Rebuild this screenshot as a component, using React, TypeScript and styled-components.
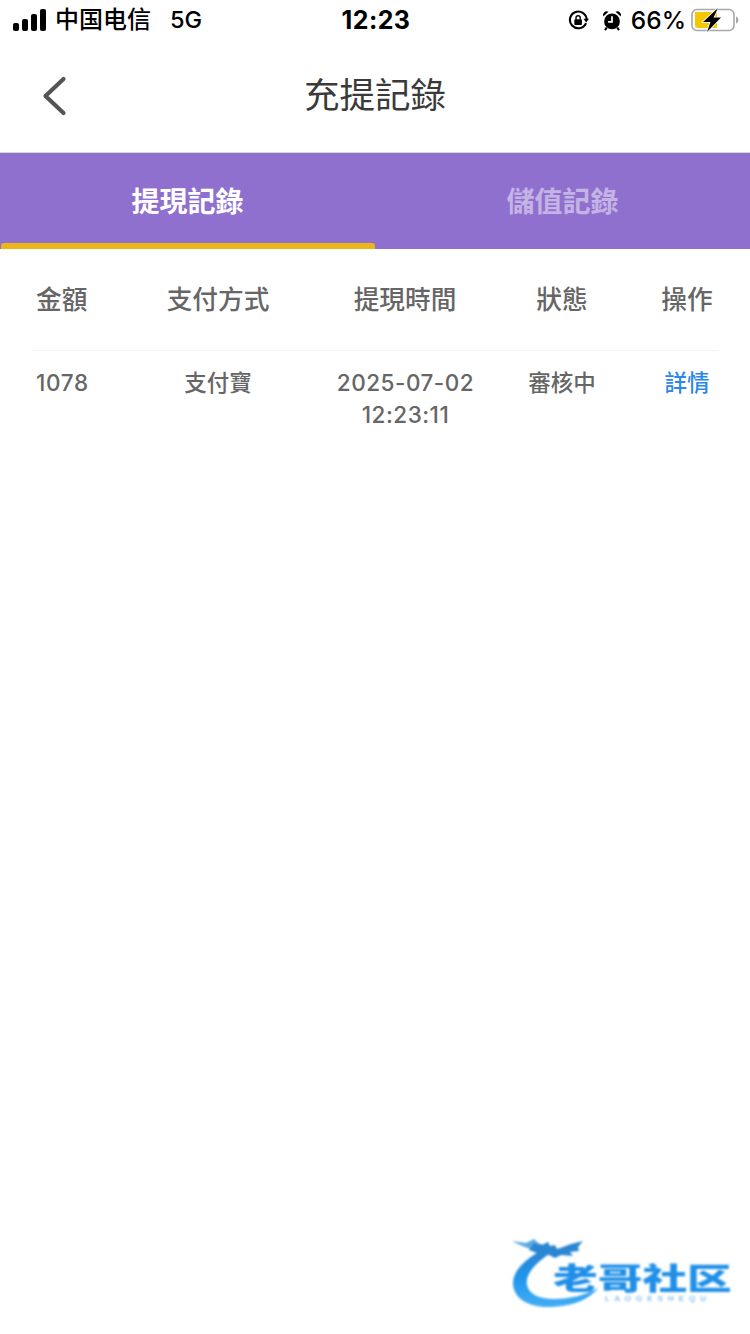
import React from 'react';
import styled, { createGlobalStyle } from 'styled-components';

const GlobalStyle = createGlobalStyle`
  html, body {
    margin: 0;
    padding: 0;
    background: #fff;
  }
  * {
    box-sizing: border-box;
  }
`;

const CJK = `Inter, "Noto Sans CJK TC", sans-serif`;

const Page = styled.div`
  position: relative;
  width: 750px;
  height: 1334px;
  overflow: hidden;
  background: #fff;
  font-family: ${CJK};
`;

const StatusBar = styled.div`
  display: grid;
  grid-template-columns: 1fr auto 1fr;
  align-items: center;
  height: 40px;
  padding: 0 11px 0 13px;
  color: #000;
`;

const StatusLeft = styled.div`
  display: flex;
  align-items: center;
  gap: 8px;
`;

const StatusRight = styled.div`
  display: flex;
  align-items: center;
  justify-content: flex-end;
  gap: 9px;
`;

const StatusIcons = styled.div`
  display: flex;
  align-items: center;
  gap: 13px;
`;

const Carrier = styled.span`
  font-family: Inter, "Noto Sans CJK SC", sans-serif;
  font-size: 24px;
  line-height: 40px;
  font-weight: 500;
`;

const Network = styled.span`
  font-size: 23.5px;
  line-height: 40px;
  font-weight: 500;
  margin-left: 11px;
`;

const Clock = styled.span`
  font-size: 25px;
  line-height: 40px;
  font-weight: 700;
  letter-spacing: 0.4px;
`;

const Percent = styled.span`
  font-size: 24.5px;
  line-height: 40px;
  font-weight: 500;
  margin-right: -4px;
`;

const NavBar = styled.div`
  position: relative;
  display: flex;
  align-items: center;
  justify-content: center;
  height: 113px;
  border-bottom: 1px solid #d9d5df;
`;

const BackButton = styled.div`
  position: absolute;
  left: 41px;
  top: 35px;
  display: flex;
`;

const Title = styled.h1`
  margin: 0;
  font-size: 35.5px;
  line-height: 48px;
  font-weight: 400;
  color: #3a3a3a;
`;

const Tabs = styled.div`
  display: flex;
  height: 96px;
  background: #9070ce;
`;

const Tab = styled.div<{ $active?: boolean }>`
  position: relative;
  flex: 1;
  display: flex;
  align-items: center;
  justify-content: center;
  padding-bottom: 2px;
  font-size: 28px;
  font-weight: 700;
  color: ${({ $active }) => ($active ? '#fff' : '#c4b3e5')};
  &::after {
    content: '';
    display: ${({ $active }) => ($active ? 'block' : 'none')};
    position: absolute;
    left: 1px;
    right: 0;
    bottom: 0;
    height: 6px;
    border-radius: 3px 3px 0 0;
    background: #ecb616;
  }
`;

const Table = styled.div`
  margin: 0 32px;
`;

const Row = styled.div<{ $head?: boolean }>`
  display: grid;
  grid-template-columns: 70px 232px 142px 172px 70px;
  align-items: start;
  text-align: center;
  color: #666;
  font-size: ${({ $head }) => ($head ? '25.7px' : '22.5px')};
  font-weight: 500;
  line-height: ${({ $head }) => ($head ? '36px' : '32px')};
  padding-top: ${({ $head }) => ($head ? '33px' : '16px')};
  padding-bottom: ${({ $head }) => ($head ? '32px' : '0')};
  border-bottom: ${({ $head }) => ($head ? '1px solid #f2f2f2' : 'none')};
  & > div:first-child {
    text-align: left;
    padding-left: 4px;
  }
  & > div:last-child {
    padding-left: 8px;
  }
`;

const AmountCell = styled.div`
  letter-spacing: 0.7px;
`;

const DateCell = styled.div`
  padding-left: 1px;
  letter-spacing: 0.5px;
  white-space: nowrap;
`;

const Link = styled.div`
  color: #2b87ea;
`;

const Watermark = styled.div`
  position: absolute;
  left: 510px;
  top: 1236px;
  width: 230px;
  height: 78px;
  filter: blur(0.8px);
`;

const WatermarkName = styled.div`
  position: absolute;
  left: 43px;
  top: 22px;
  font-family: "Noto Sans CJK SC", sans-serif;
  font-size: 30px;
  line-height: 36px;
  font-weight: 900;
  white-space: nowrap;
  color: #1f8fe8;
  transform: scaleX(1.49);
  transform-origin: left center;
`;

const WatermarkSub = styled.div`
  position: absolute;
  left: 95px;
  top: 58px;
  font-family: "Liberation Sans", sans-serif;
  font-size: 8px;
  line-height: 9px;
  letter-spacing: 5px;
  white-space: nowrap;
  color: #4aa5ec;
`;

const SignalIcon = () => (
  <svg width="34" height="22" viewBox="0 0 34 22">
    <rect x="0" y="14" width="6" height="8" rx="2" fill="#000" />
    <rect x="9" y="10" width="6" height="12" rx="2" fill="#000" />
    <rect x="18" y="5" width="6" height="17" rx="2" fill="#000" />
    <rect x="27" y="0" width="6" height="22" rx="2" fill="#000" />
  </svg>
);

const RotationLockIcon = () => (
  <svg width="21" height="20" viewBox="0 0 22 21" fill="none">
    <path d="M18.600 14.500A8.800 8.800 0 1 1 19.600 10" stroke="#000" strokeWidth="2.200" strokeLinecap="round" />
    <path d="M16.200 9.200h5.800l-2.900 4z" fill="#000" />
    <rect x="6.600" y="9.600" width="8" height="6.200" rx="1" fill="#000" />
    <path d="M8.400 10V8.200a2.200 2.200 0 0 1 4.400 0V10" stroke="#000" strokeWidth="1.500" />
  </svg>
);

const AlarmIcon = () => (
  <svg width="20" height="21" viewBox="0 0 22 24">
    <circle cx="11" cy="13" r="9" fill="#000" />
    <path d="M1 7.500a4.300 4.300 0 0 1 6-5.400zM21 7.500a4.300 4.300 0 0 0-6-5.400z" fill="#000" />
    <path d="M11 7v6.600H6.600" stroke="#fff" strokeWidth="2" fill="none" />
    <path d="M5 20l-2 3M17 20l2 3" stroke="#000" strokeWidth="2.400" />
  </svg>
);

const BatteryIcon = () => (
  <svg width="48" height="24" viewBox="0 0 48 24">
    <rect x="1" y="1.500" width="42" height="21" rx="5" fill="none" stroke="#a8a8a8" strokeWidth="1.600" />
    <path d="M45 8.500c1.600.5 2.400 1.800 2.400 3.500s-.8 3-2.400 3.500z" fill="#a8a8a8" />
    <path d="M4 4h22v16H7a3 3 0 0 1-3-3z" fill="#f6c700" />
    <path d="M27 0 12 14h7.500L16 24l14-14.500h-7.500z" fill="#000" stroke="#fff" strokeWidth="1.600" paintOrder="stroke" />
  </svg>
);

const BackIcon = () => (
  <svg width="28" height="42" viewBox="0 0 28 42" fill="none">
    <path d="M22.500 4 4.500 21l18 17" stroke="#555" strokeWidth="4.200" strokeLinecap="round" strokeLinejoin="round" />
  </svg>
);

const DragonMark = () => (
  <svg
    width="120"
    height="78"
    viewBox="0 0 120 78"
    style={{ position: 'absolute', left: 0, top: 0 }}
  >
    <defs>
      <linearGradient id="dragon" x1="0" y1="0" x2="0" y2="1">
        <stop offset="0" stopColor="#2a84d0" />
        <stop offset="0.5" stopColor="#1f97ee" />
        <stop offset="1" stopColor="#45aef4" />
      </linearGradient>
    </defs>
    <path
      d="M30 15C12 26 3 36 3 47c0 15 15 24 34 24 24 0 42-7 51-19-12 7-28 11-44 11-15 0-25-5-27-14-2-9 6-20 22-31z"
      fill="url(#dragon)"
    />
    <path d="M2 5l14 2 8-4 4 4 8 3-6 5-10-2-10-4z" fill="#5aa9e2" />
    <path
      d="M24 7l8 2 6-3 2 4 5-1 2 4 6-2 8-3 12-3-5 6 1 4-9 1 3 4-12-1-6 3-8-4-10-1-8-3z"
      fill="#2a86d2"
    />
  </svg>
);

export default function App() {
  return (
    <Page>
      <GlobalStyle />
      <StatusBar>
        <StatusLeft>
          <SignalIcon />
          <Carrier>中国电信</Carrier>
          <Network>5G</Network>
        </StatusLeft>
        <Clock>12:23</Clock>
        <StatusRight>
          <StatusIcons>
            <RotationLockIcon />
            <AlarmIcon />
          </StatusIcons>
          <Percent>66%</Percent>
          <BatteryIcon />
        </StatusRight>
      </StatusBar>
      <NavBar>
        <BackButton>
          <BackIcon />
        </BackButton>
        <Title>充提記錄</Title>
      </NavBar>
      <Tabs>
        <Tab $active>提現記錄</Tab>
        <Tab>儲值記錄</Tab>
      </Tabs>
      <Table>
        <Row $head>
          <div>金額</div>
          <div>支付方式</div>
          <div>提現時間</div>
          <div>狀態</div>
          <div>操作</div>
        </Row>
        <Row>
          <AmountCell>1078</AmountCell>
          <div>支付寶</div>
          <DateCell>
            2025-07-02
            <br />
            12:23:11
          </DateCell>
          <div>審核中</div>
          <Link>詳情</Link>
        </Row>
      </Table>
      <Watermark>
        <DragonMark />
        <WatermarkName>老哥社区</WatermarkName>
        <WatermarkSub>LAOGESHEQU</WatermarkSub>
      </Watermark>
    </Page>
  );
}
